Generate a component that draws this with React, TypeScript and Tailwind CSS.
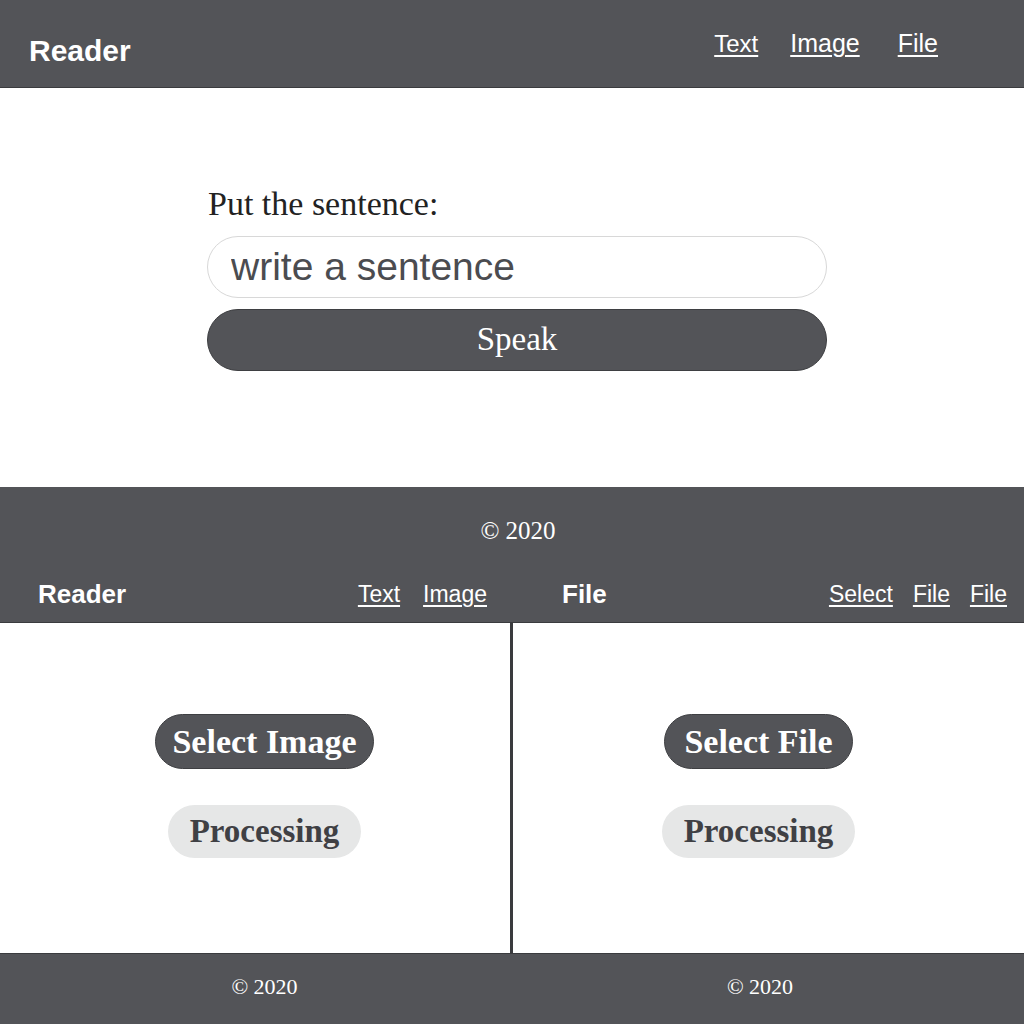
const sans = "font-['Liberation_Sans',Arial,sans-serif]";
const serif = "font-['Liberation_Serif','Times_New_Roman',serif]";

const NavLink = ({ label, size }: { label: string; size: string }) => (
    <a href="#" className={`${size} text-white underline underline-offset-[3px] decoration-[1.5px]`}>
        {label}
    </a>
);

const PanelHeader = ({ title, links, pad, gap }: { title: string; links: string[]; pad: string; gap: string }) => (
    <div className={`flex h-[56px] items-center justify-between ${pad}`}>
        <span className={`${sans} text-[26px] font-bold text-white`}>{title}</span>
        <div className={`${sans} flex items-center ${gap}`}>
            {links.map((l, i) => (
                <NavLink key={i} label={l} size="text-[23px]" />
            ))}
        </div>
    </div>
);

const Panel = ({ primary, offset, pad }: { primary: string; offset: string; pad: string }) => (
    <div className={`flex h-[330px] flex-col items-center pt-[91px] ${offset}`}>
        <button className={`${serif} h-[55px] rounded-full border border-[#3e3f42] bg-[#535458] ${pad} text-[34px] font-bold leading-none text-white`}>
            {primary}
        </button>
        <button className={`${serif} mt-[36px] h-[53px] rounded-full bg-[#e6e7e7] px-[22px] text-[33px] font-bold leading-none text-[#3f4044]`}>
            Processing
        </button>
    </div>
);

export default function App() {
    return (
        <div className="flex h-[1024px] w-[1024px] flex-col bg-white">
            {/* Top header */}
            <header className="flex h-[88px] items-center justify-between border-b border-[#3a3b3e] bg-[#535458] pl-[29px] pr-[86px]">
                <span className={`${sans} mt-[14px] text-[30px] font-bold text-white`}>Reader</span>
                <nav className={`${sans} flex items-center`}>
                    <NavLink label="Text" size="text-[24px]" />
                    <span className="w-[32px]" />
                    <NavLink label="Image" size="text-[25px]" />
                    <span className="w-[38px]" />
                    <NavLink label="File" size="text-[25px]" />
                </nav>
            </header>

            {/* Text reader */}
            <main className="flex h-[399px] flex-col items-center pl-[10px] pt-[97px]">
                <div className="w-[620px]">
                    <label className={`${serif} block pl-[1px] text-[34px] leading-[38px] text-[#222]`}>
                        Put the sentence:
                    </label>
                    <input
                        placeholder="write a sentence"
                        className={`${sans} mt-[13px] h-[62px] w-full rounded-full border border-[#d8d8d8] bg-white px-[23px] text-[39px] text-[#4b4c50] outline-none placeholder:text-[#4b4c50]`}
                    />
                    <button className={`${serif} mt-[11px] h-[62px] w-full rounded-full border border-[#3e3f42] bg-[#535458] text-[33px] text-white`}>
                        Speak
                    </button>
                </div>
            </main>

            {/* Footer band + split headers */}
            <div className="border-b border-[#3a3b3e] bg-[#535458]">
                <div className={`${serif} h-[79px] pl-[12px] pt-[30px] text-center text-[25px] leading-[28px] text-white`}>
                    © 2020
                </div>
                <div className="grid grid-cols-[510px_514px]">
                    <PanelHeader title="Reader" links={["Text", "Image"]} pad="pl-[38px] pr-[23px]" gap="gap-[23px]" />
                    <PanelHeader title="File" links={["Select", "File", "File"]} pad="pl-[52px] pr-[17px]" gap="gap-[20px]" />
                </div>
            </div>

            {/* Split panels */}
            <div className="grid grid-cols-[510px_514px] border-b border-[#3a3b3e]">
                <Panel primary="Select Image" offset="pl-[19px]" pad="px-[16px]" />
                <div className="border-l-[3px] border-[#3a3b3e]">
                    <Panel primary="Select File" offset="pr-[20px]" pad="px-[19px]" />
                </div>
            </div>

            {/* Bottom footers */}
            <footer className="grid flex-1 grid-cols-[510px_514px] bg-[#535458]">
                <div className={`${serif} pl-[19px] pt-[20px] text-center text-[22px] leading-[26px] text-white`}>© 2020</div>
                <div className={`${serif} pr-[14px] pt-[20px] text-center text-[22px] leading-[26px] text-white`}>© 2020</div>
            </footer>
        </div>
    );
}
